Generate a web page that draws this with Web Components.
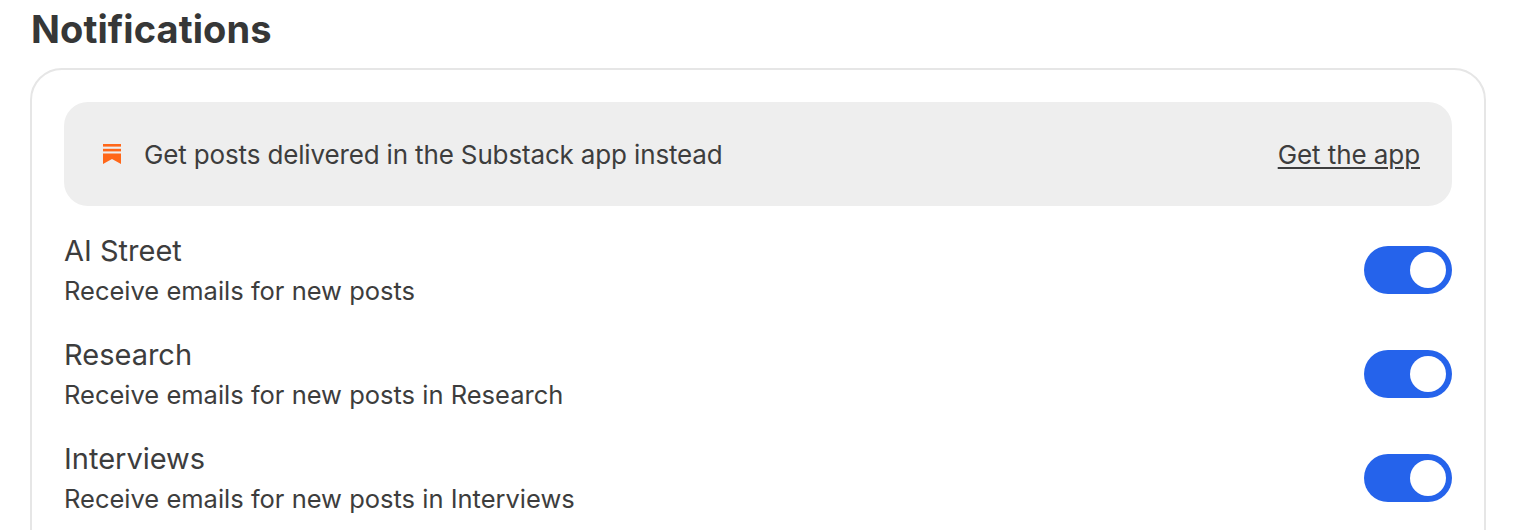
<!DOCTYPE html>
<html>
<head>
<meta charset="utf-8">
<style>
  html, body { margin: 0; height: 530px; overflow: hidden; background: #fff; }
  body { font-family: Inter, "Liberation Sans", sans-serif; color: #363737; }
</style>
</head>
<body>
<notif-page>
  <app-banner>Get posts delivered in the Substack app instead</app-banner>
  <notif-row heading="AI Street" sub="Receive emails for new posts"></notif-row>
  <notif-row heading="Research" sub="Receive emails for new posts in Research"></notif-row>
  <notif-row heading="Interviews" sub="Receive emails for new posts in Interviews"></notif-row>
</notif-page>
<script>
  class NotifPage extends HTMLElement {
    constructor() {
      super();
      this.attachShadow({ mode: 'open' }).innerHTML = `
        <style>
          :host { display: block; padding: 0 30px; height: 530px; overflow: hidden; box-sizing: border-box; }
          h2 { margin: 0; padding: 7px 0 0 1px; height: 68px; box-sizing: border-box; font-size: 38px; line-height: 44px; font-weight: 700; letter-spacing: 0.08px; }
          .card { border: 2px solid #e6e6e6; border-radius: 32px; padding: 32px; height: 600px; box-sizing: border-box; display: flex; flex-direction: column; }
        </style>
        <h2>Notifications</h2>
        <div class="card"><slot></slot></div>
      `;
    }
  }

  class AppBanner extends HTMLElement {
    constructor() {
      super();
      this.attachShadow({ mode: 'open' }).innerHTML = `
        <style>
          :host { display: flex; align-items: center; height: 104px; padding: 0 32px 0 39px; background: #eeeeee; border-radius: 24px; font-size: 26px; letter-spacing: -0.15px; color: #3d3d3d; margin-bottom: 12px; }
          svg { width: 18px; height: 20px; margin-right: 23px; flex: none; }
          span { flex: 1; }
          a { color: inherit; letter-spacing: -0.08px; text-decoration: underline; text-underline-offset: 3px; }
        </style>
        <svg viewBox="0 0 18 20" fill="#ff6719">
          <rect x="0" y="0" width="18" height="2.6"/>
          <rect x="0" y="4.8" width="18" height="2.6"/>
          <path d="M0 9.6H18V20L9 15 0 20Z"/>
        </svg>
        <span><slot></slot></span>
        <a href="#">Get the app</a>
      `;
    }
  }

  class NotifRow extends HTMLElement {
    constructor() {
      super();
      this.attachShadow({ mode: 'open' }).innerHTML = `
        <style>
          :host { display: flex; align-items: center; justify-content: space-between; height: 104px; color: #3d3d3d; }
          .text { padding-top: 2px; }
          .title { font-size: 29px; line-height: 40px; }
          .sub { font-size: 25.5px; line-height: 40px; }
          .toggle { width: 88px; height: 48px; border-radius: 24px; background: #2563eb; display: flex; align-items: center; justify-content: flex-end; padding-right: 6px; box-sizing: border-box; }
          .knob { width: 36px; height: 36px; border-radius: 50%; background: #fff; }
        </style>
        <div class="text">
          <div class="title">${this.getAttribute('heading')}</div>
          <div class="sub">${this.getAttribute('sub')}</div>
        </div>
        <div class="toggle"><div class="knob"></div></div>
      `;
    }
  }

  customElements.define('notif-page', NotifPage);
  customElements.define('app-banner', AppBanner);
  customElements.define('notif-row', NotifRow);
</script>
</body>
</html>
